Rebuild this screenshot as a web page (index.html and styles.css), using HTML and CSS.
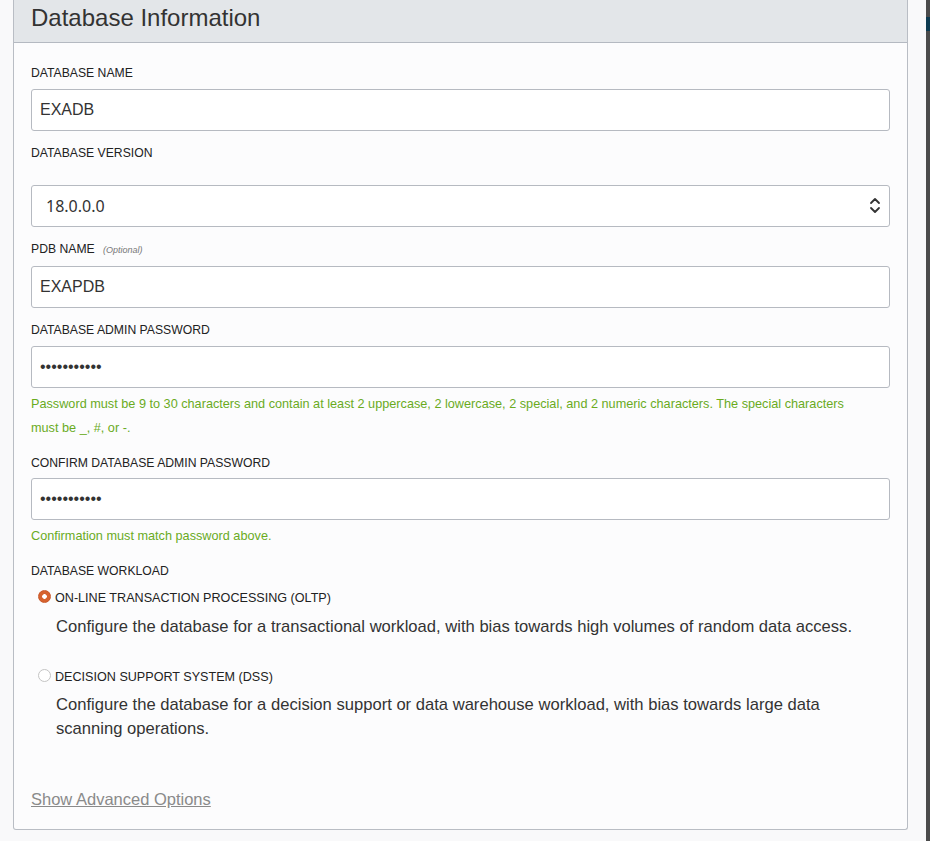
FILE: index.html
```html
<!DOCTYPE html>
<html lang="en">
<head>
<meta charset="utf-8">
<title>Database Information</title>
<link rel="stylesheet" href="styles.css">
</head>
<body>
<div class="page">
  <main class="main">
    <section class="panel">
      <header class="panel-head">
        <h2 class="panel-title">Database Information</h2>
      </header>
      <div class="panel-body">
        <div class="label">DATABASE NAME</div>
        <div class="field">EXADB</div>

        <div class="label lbl-gap lbl-select">DATABASE VERSION</div>
        <div class="field select">
          <span class="select-val">18.0.0.0</span>
          <svg class="chev" width="12" height="20" viewBox="0 0 12 20" aria-hidden="true">
            <path d="M2 7 L6 3 L10 7" fill="none" stroke="#333" stroke-width="1.8" stroke-linecap="round" stroke-linejoin="round"/>
            <path d="M2 12 L6 16 L10 12" fill="none" stroke="#333" stroke-width="1.8" stroke-linecap="round" stroke-linejoin="round"/>
          </svg>
        </div>

        <div class="label lbl-gap">PDB NAME <span class="optional">(Optional)</span></div>
        <div class="field">EXAPDB</div>

        <div class="label lbl-gap">DATABASE ADMIN PASSWORD</div>
        <div class="field pw">•••••••••••</div>
        <p class="help">Password must be 9 to 30 characters and contain at least 2 uppercase, 2 lowercase, 2 special, and 2 numeric characters. The special characters must be _, #, or -.</p>

        <div class="label help-gap">CONFIRM DATABASE ADMIN PASSWORD</div>
        <div class="field pw">•••••••••••</div>
        <p class="help">Confirmation must match password above.</p>

        <div class="label help-gap">DATABASE WORKLOAD</div>
        <div class="radio-row first">
          <span class="radio on"></span>
          <span class="radio-label">ON-LINE TRANSACTION PROCESSING (OLTP)</span>
        </div>
        <p class="desc">Configure the database for a transactional workload, with bias towards high volumes of random data access.</p>
        <div class="radio-row second">
          <span class="radio"></span>
          <span class="radio-label">DECISION SUPPORT SYSTEM (DSS)</span>
        </div>
        <p class="desc desc-2">Configure the database for a decision support or data warehouse workload, with bias towards large data scanning operations.</p>

        <a class="adv-link" href="#">Show Advanced Options</a>
      </div>
    </section>
  </main>
  <div class="edge">
    <div class="edge-accent"></div>
  </div>
</div>
</body>
</html>
```

FILE: styles.css
```css
html, body {
  margin: 0;
  padding: 0;
}
body {
  font-family: "Liberation Sans", Arial, sans-serif;
  background: #f9f9fa;
  color: #333;
}
.page {
  display: flex;
  height: 841px;
  overflow: hidden;
}
.main {
  width: 926px;
  flex: none;
  padding-left: 13px;
  box-sizing: border-box;
}
.edge {
  flex: 1;
  background: #4b4b4b;
  padding-top: 17px;
}
.edge-accent {
  height: 14px;
  background: #0d3b51;
}
.panel {
  width: 895px;
  box-sizing: border-box;
  border: 1px solid #b9bdc4;
  border-top: none;
  border-radius: 0 0 3px 3px;
  background: #fcfcfd;
}
.panel-head {
  height: 42px;
  background: #e3e6e9;
  border-bottom: 1px solid #b4b9c1;
  padding: 0 17px;
}
.panel-title {
  margin: 0;
  font-weight: normal;
  font-size: 24px;
  line-height: 36px;
  color: #333;
}
.panel-body {
  padding: 20px 17px 18px 17px;
}
.label {
  font-size: 12.2px;
  line-height: 20px;
  color: #222;
  margin-bottom: 6px;
}
.lbl-gap {
  margin-top: 12px;
}
.lbl-select {
  margin-bottom: 22px;
}
.help-gap {
  margin-top: 13px;
  margin-bottom: 5px;
}
.optional {
  font-size: 9px;
  font-style: italic;
  color: #777;
  margin-left: 5px;
}
.field {
  height: 42px;
  box-sizing: border-box;
  border: 1px solid #b6bac1;
  border-radius: 3px;
  background: #fff;
  padding: 0 8px;
  font-size: 16px;
  line-height: 40px;
  color: #333;
}
.select {
  display: flex;
  align-items: center;
  justify-content: space-between;
  padding: 0 8px 0 14px;
  font-family: "Noto Sans", "Open Sans", sans-serif;
}
.chev {
  display: block;
}
.help {
  margin: 4px 0 0;
  padding-right: 32px;
  font-size: 12.7px;
  line-height: 24px;
  color: #6aab1e;
}
.radio-row {
  display: flex;
  align-items: center;
  height: 20px;
  padding-left: 7px;
  margin-top: 7px;
}
.radio-row.second {
  margin-top: 28px;
}
.radio {
  width: 13px;
  height: 13px;
  box-sizing: border-box;
  border-radius: 50%;
  border: 1px solid #c4c4c4;
  background: #fff;
  margin-right: 4px;
  margin-top: -3px;
  flex: none;
}
.radio.on {
  border: 1px solid #c9582a;
  background: radial-gradient(circle at center, #fff 0, #fff 2px, #d6622e 2.6px, #d6622e 100%);
}
.radio-label {
  font-size: 12.6px;
  color: #222;
}
.desc {
  margin: 7px 0 0 25px;
  font-size: 16.6px;
  line-height: 24px;
  color: #333;
}
.desc-2 {
  margin-top: 6px;
}
.adv-link {
  display: inline-block;
  margin-top: 46px;
  font-size: 16.5px;
  line-height: 24px;
  color: #8a8a8a;
  text-decoration: underline;
}
```
